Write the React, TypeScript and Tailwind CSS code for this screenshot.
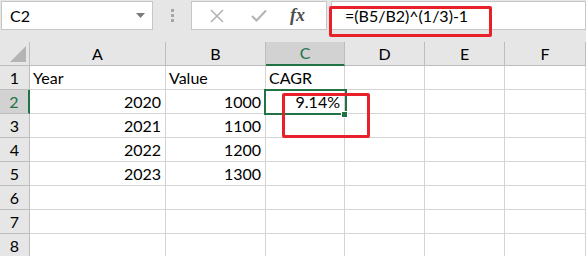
import React from 'react'

const cols = ['A', 'B', 'C', 'D', 'E', 'F']
const colW = ['w-[136px]', 'w-[100px]', 'w-[79px]', 'w-[80px]', 'w-[80px]', 'w-[81px]']

const rows: { year?: string; value?: string; cagr?: string; left?: boolean }[] = [
  { year: 'Year', value: 'Value', cagr: 'CAGR', left: true },
  { year: '2020', value: '1000', cagr: '9.14%' },
  { year: '2021', value: '1100' },
  { year: '2022', value: '1200' },
  { year: '2023', value: '1300' },
  {},
  {},
  {},
]

const Cell = ({ w, text, left }: { w: string; text?: string; left?: boolean }) => (
  <div
    className={`${w} h-[24px] shrink-0 border-r border-b border-[#d4d4d4] flex items-end leading-[20px] pb-[1px] ${
      left ? 'justify-start pl-[3px]' : 'justify-end pr-[4px]'
    }`}
  >
    {text}
  </div>
)

const App = () => {
  return (
    <div
      className="relative w-[586px] h-[256px] overflow-hidden bg-[#e6e6e6] text-[16px] text-black"
      style={{ fontFamily: 'Lato, "Open Sans", sans-serif' }}
    >
      {/* formula bar */}
      <div className="flex items-start h-[42px] pt-[1px]">
        <div className="ml-[1px] w-[152px] h-[29px] bg-white border border-[#c6c6c6] flex items-center justify-between pl-[8px] pr-[7px]">
          <span>C2</span>
          <svg width="9" height="5" viewBox="0 0 9 5">
            <path d="M0 0 H9 L4.5 5 Z" fill="#7a7a7a" />
          </svg>
        </div>
        <div className="w-[38px] h-[29px] flex flex-col items-center justify-center gap-[2px]">
          <div className="w-[3px] h-[3px] bg-[#a6a6a6]" />
          <div className="w-[3px] h-[3px] bg-[#a6a6a6]" />
          <div className="w-[3px] h-[3px] bg-[#a6a6a6]" />
        </div>
        <div className="w-[136px] h-[29px] bg-white border border-[#c6c6c6] flex items-center">
          <svg className="ml-[18px]" width="14" height="14" viewBox="0 0 14 14">
            <path d="M1 1 L13 13 M13 1 L1 13" stroke="#b3b3b3" strokeWidth="1.6" />
          </svg>
          <svg className="ml-[27px]" width="16" height="13" viewBox="0 0 16 13">
            <path d="M1 7 L5.5 11.5 L15 1.5" stroke="#b3b3b3" strokeWidth="2" fill="none" />
          </svg>
          <span
            className="ml-[23px] italic font-bold text-[18px] text-[#4d4d4d]"
            style={{ fontFamily: '"Liberation Serif", serif' }}
          >
            fx
          </span>
        </div>
        <div className="ml-[4px] flex-1 h-[29px] bg-white border border-[#c6c6c6] flex items-center pl-[13px]">
          =(B5/B2)^(1/3)-1
        </div>
      </div>

      {/* column headers */}
      <div className="flex h-[24px]">
        <div className="w-[30px] h-[24px] shrink-0 border-r border-b border-[#bdbdbd] flex items-end justify-end pr-[3px] pb-[3px]">
          <svg width="16" height="16" viewBox="0 0 16 16">
            <path d="M16 0 V16 H0 Z" fill="#b4b4b4" />
          </svg>
        </div>
        {cols.map((c, i) =>
          c === 'C' ? (
            <div
              key={c}
              className={`${colW[i]} h-[24px] shrink-0 bg-[#d2d2d2] border-r border-[#bdbdbd] border-b-2 border-b-[#217346] text-[#217346] flex items-center justify-center`}
            >
              {c}
            </div>
          ) : (
            <div
              key={c}
              className={`${colW[i]} h-[24px] shrink-0 border-r border-b border-[#bdbdbd] flex items-center justify-center`}
            >
              {c}
            </div>
          )
        )}
      </div>

      {/* rows */}
      <div className="bg-white">
        {rows.map((r, i) => (
          <div key={i} className="flex">
            {i === 1 ? (
              <div className="w-[30px] h-[24px] shrink-0 bg-[#d2d2d2] border-b border-[#bdbdbd] border-r-2 border-r-[#217346] text-[#217346] flex items-center justify-center">
                {i + 1}
              </div>
            ) : (
              <div className="w-[30px] h-[24px] shrink-0 bg-[#e6e6e6] border-r border-b border-[#bdbdbd] flex items-center justify-center">
                {i + 1}
              </div>
            )}
            <Cell w={colW[0]} text={r.year} left={r.left} />
            <Cell w={colW[1]} text={r.value} left={r.left} />
            <Cell w={colW[2]} text={r.cagr} left={r.left} />
            <Cell w={colW[3]} />
            <Cell w={colW[4]} />
            <Cell w={colW[5]} />
          </div>
        ))}
      </div>

      {/* selection on C2 */}
      <div className="absolute left-[264px] top-[89px] w-[83px] h-[26px] border-2 border-[#217346]" />
      <div className="absolute left-[341px] top-[111px] w-[7px] h-[7px] bg-[#217346] border border-white" />

      {/* red highlight boxes */}
      <div className="absolute left-[329px] top-[6px] w-[163px] h-[31px] border-[3px] border-[#e8202a] rounded-[2px]" />
      <div className="absolute left-[282px] top-[93px] w-[88px] h-[45px] border-[3px] border-[#e8202a] rounded-[2px]" />
    </div>
  )
}

export default App
